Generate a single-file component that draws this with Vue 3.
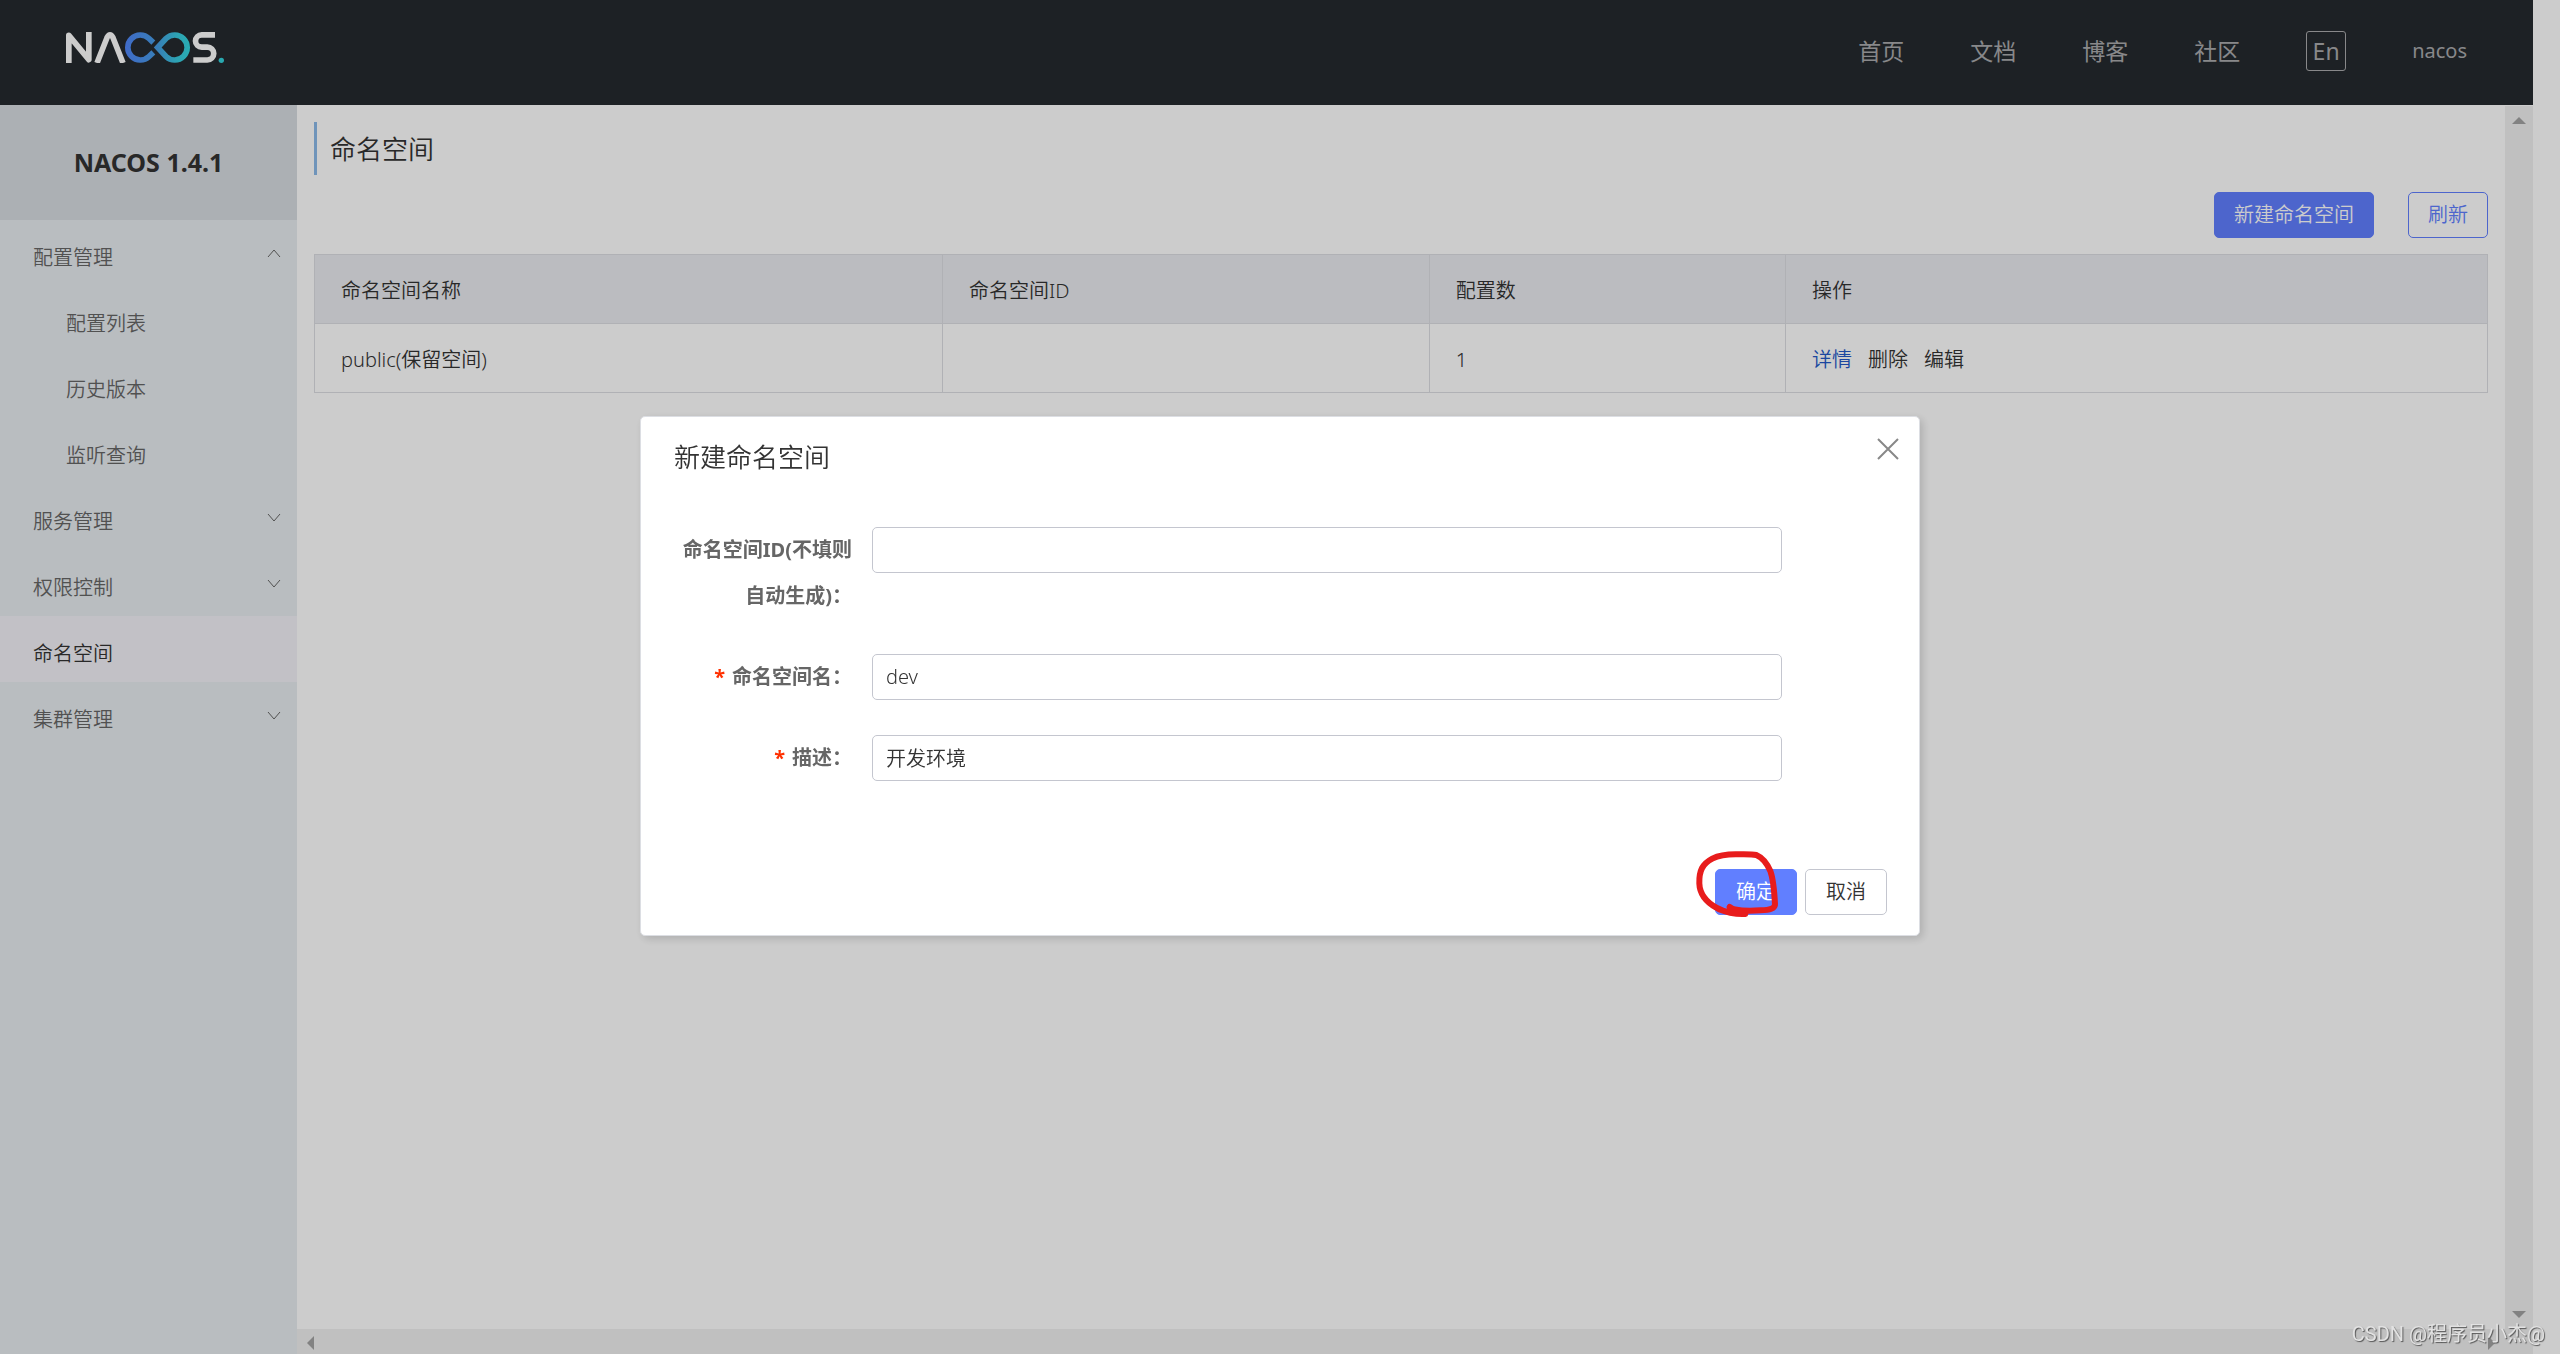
<script setup>
import { ref } from 'vue'

const navLinks = ['首页', '文档', '博客', '社区']

const menu = [
  { label: '配置管理', open: true, children: ['配置列表', '历史版本', '监听查询'] },
  { label: '服务管理', children: [] },
  { label: '权限控制', children: [] },
  { label: '命名空间', active: true },
  { label: '集群管理', children: [] },
]

const rows = [{ name: 'public(保留空间)', id: '', count: 1 }]

const namespaceId = ref('')
const namespaceName = ref('dev')
const description = ref('开发环境')
</script>

<template>
  <div class="page">
    <header class="topbar">
      <a class="logo" href="#" aria-label="Nacos">
        <svg viewBox="198 96 474 93" width="158" height="31" fill="none" stroke-width="17">
          <defs>
            <linearGradient id="loop" gradientUnits="userSpaceOnUse" x1="374" y1="0" x2="571" y2="0">
              <stop offset="0" stop-color="#5086fb" />
              <stop offset="0.5" stop-color="#469fe6" />
              <stop offset="0.8" stop-color="#38cce0" />
              <stop offset="1" stop-color="#34d8e0" />
            </linearGradient>
          </defs>
          <g stroke="#fff" stroke-linejoin="round">
            <path d="M206.500 189V106L266.500 179V96" />
            <path d="M291 189L321 113Q330 96 339 113L369 189" />
            <path d="M645 104.500H605A18.500 18.500 0 0 0 605 141.500H622A19 19 0 0 1 622 180H580" />
          </g>
          <g stroke="url(#loop)">
            <path d="M460 128L447 115.500A37.500 37.500 0 1 0 447 169.500L460 157" />
            <path d="M473 142.500L498 115.500A37.500 37.500 0 1 1 498 169.500Z" />
          </g>
          <circle cx="664" cy="181" r="8" fill="#34d2dc" />
        </svg>
      </a>
      <nav class="nav">
        <a v-for="link in navLinks" :key="link" href="#">{{ link }}</a>
        <button class="lang" type="button">En</button>
        <a class="user" href="#">nacos</a>
      </nav>
    </header>

    <div class="shell">
      <aside class="sidebar">
        <div class="version">NACOS 1.4.1</div>
        <ul class="menu">
          <template v-for="item in menu" :key="item.label">
            <li>
              <a class="item" :class="{ active: item.active }" href="#">
                <span>{{ item.label }}</span>
                <svg v-if="item.children" class="chevron" viewBox="0 0 14 9" width="14" height="9">
                  <path :d="item.open ? 'M1 8L7 1L13 8' : 'M1 1L7 8L13 1'" />
                </svg>
              </a>
            </li>
            <template v-if="item.open">
              <li v-for="child in item.children" :key="child">
                <a class="item child" href="#"><span>{{ child }}</span></a>
              </li>
            </template>
          </template>
        </ul>
      </aside>

      <div class="viewport">
        <main class="content">
          <h1 class="title">命名空间</h1>
          <div class="toolbar">
            <button class="btn primary" type="button">新建命名空间</button>
            <button class="btn outline" type="button">刷新</button>
          </div>
          <table class="grid">
            <colgroup>
              <col class="c-name" />
              <col class="c-id" />
              <col class="c-count" />
              <col />
            </colgroup>
            <thead>
              <tr>
                <th>命名空间名称</th>
                <th>命名空间ID</th>
                <th>配置数</th>
                <th>操作</th>
              </tr>
            </thead>
            <tbody>
              <tr v-for="row in rows" :key="row.name">
                <td>{{ row.name }}</td>
                <td>{{ row.id }}</td>
                <td>{{ row.count }}</td>
                <td>
                  <div class="actions">
                    <a class="detail" href="#">详情</a>
                    <a href="#">删除</a>
                    <a href="#">编辑</a>
                  </div>
                </td>
              </tr>
            </tbody>
          </table>
        </main>
        <div class="track vertical" aria-hidden="true">
          <svg viewBox="0 0 14 7" width="14" height="7"><path d="M0 7L7 0L14 7Z" /></svg>
          <svg viewBox="0 0 14 7" width="14" height="7"><path d="M0 0L7 7L14 0Z" /></svg>
        </div>
        <div class="track horizontal" aria-hidden="true">
          <svg viewBox="0 0 7 14" width="7" height="14"><path d="M7 0L0 7L7 14Z" /></svg>
          <svg viewBox="0 0 7 14" width="7" height="14"><path d="M0 0L7 7L0 14Z" /></svg>
        </div>
        <div class="track"></div>
      </div>
    </div>

    <div class="overlay">
      <form class="dialog" role="dialog" aria-labelledby="dialog-title" @submit.prevent>
        <div class="dialog-head">
          <h2 id="dialog-title">新建命名空间</h2>
          <button class="close" type="button" aria-label="关闭">
            <svg viewBox="0 0 22 22" width="22" height="22"><path d="M1 1L21 21M21 1L1 21" /></svg>
          </button>
        </div>
        <div class="fields">
          <div class="field">
            <label for="ns-id">命名空间ID(不填则自动生成)：</label>
            <input id="ns-id" v-model="namespaceId" type="text" />
          </div>
          <div class="field required">
            <label for="ns-name">命名空间名：</label>
            <input id="ns-name" v-model="namespaceName" type="text" />
          </div>
          <div class="field required">
            <label for="ns-desc">描述：</label>
            <input id="ns-desc" v-model="description" type="text" />
          </div>
        </div>
        <div class="dialog-foot">
          <div class="marked">
            <button class="btn primary" type="submit">确定</button>
            <svg class="scribble" viewBox="129 81 270 219" width="90" height="73" aria-hidden="true">
              <path
                d="M242 261C258 272 275 280 289 282C262 284 224 276 202 263C172 246 152 220 151 190C150 152 160 132 190 116C212 105 235 103 260 103C290 103 308 102 322 105C338 112 354 130 364 153C374 180 376 215 378 252C379 266 362 270 335 271C310 273 275 272 258 268"
              />
            </svg>
          </div>
          <button class="btn normal" type="button">取消</button>
        </div>
      </form>
    </div>

    <div class="watermark">CSDN @程序员小杰@</div>
  </div>
</template>

<style>
body {
  margin: 0;
  background: #fff;
}
</style>

<style scoped>
.page,
.page * {
  box-sizing: border-box;
}

.page {
  display: flex;
  flex-direction: column;
  min-height: 100vh;
  padding-right: 27px;
  font-family: "Noto Sans", "Noto Sans CJK SC", sans-serif;
  font-size: 20px;
  font-weight: 350;
  line-height: 28px;
  color: #333;
}

a {
  color: inherit;
  text-decoration: none;
}

button,
input {
  font: inherit;
  color: inherit;
}

.topbar {
  display: flex;
  align-items: center;
  justify-content: space-between;
  height: 105px;
  padding: 0 66px;
  background: #252a2f;
}

.logo {
  display: flex;
  padding-bottom: 10px;
}

.nav {
  display: flex;
  align-items: center;
  gap: 66px;
  padding-bottom: 4px;
  font-size: 23px;
  font-weight: 400;
  color: #aaabad;
}

.lang {
  width: 40px;
  height: 40px;
  padding: 0;
  border: 1px solid #aaabad;
  border-radius: 3px;
  background: none;
  line-height: 32px;
}

.user {
  font-size: 20px;
}

.shell {
  display: flex;
  flex: 1;
}

.sidebar {
  width: 297px;
  background: #e8edf1;
}

.version {
  height: 115px;
  background: #d7dce2;
  font-size: 25px;
  font-weight: 700;
  line-height: 115px;
  text-align: center;
}

.menu {
  margin: 0;
  padding: 0;
  list-style: none;
}

.item {
  display: flex;
  align-items: center;
  justify-content: space-between;
  height: 66px;
  padding: 0 16px 0 33px;
  color: #666;
}

.item span {
  padding-top: 10px;
}

.item.child {
  padding-left: 66px;
}

.item.active {
  background: #f3f2f8;
  color: #333;
}

.chevron {
  fill: none;
  stroke: #666;
  stroke-width: 1;
}

.viewport {
  display: grid;
  flex: 1;
  grid-template-columns: 1fr 28px;
  grid-template-rows: 1fr 25px;
}

.content {
  padding: 17px;
}

.title {
  height: 53px;
  margin: 0 0 17px;
  padding-left: 13px;
  border-left: 3px solid #8bb9e9;
  font-size: 26px;
  font-weight: inherit;
  line-height: 54px;
}

.toolbar {
  display: flex;
  justify-content: flex-end;
  gap: 34px;
  margin-bottom: 16px;
}

.btn {
  height: 46px;
  padding: 0 19px;
  border: 1px solid #617fff;
  border-radius: 5px;
  background: #fff;
  line-height: 44px;
  white-space: nowrap;
}

.btn.primary {
  background: #617fff;
  color: #fff;
}

.btn.outline {
  color: #617fff;
}

.btn.normal {
  border-color: #c4c6cf;
}

.grid {
  width: 100%;
  border-collapse: collapse;
  table-layout: fixed;
}

.c-name {
  width: 28.9%;
}

.c-id {
  width: 22.4%;
}

.c-count {
  width: 16.4%;
}

.grid th,
.grid td {
  height: 69px;
  padding: 4px 26px 0;
  border: 1px solid #dcdee3;
  font-weight: inherit;
  text-align: left;
}

.grid th {
  background: #eaecf0;
}

.actions {
  display: flex;
  gap: 16px;
}

.detail {
  color: #2458c8;
}

.track {
  display: flex;
  align-items: center;
  justify-content: space-between;
  background: #f1f1f1;
  fill: #a3a3a3;
}

.track.vertical {
  flex-direction: column;
  margin-top: 1px;
  padding: 11px 0;
}

.track.horizontal {
  padding: 2px 10px 0;
}

.overlay {
  position: fixed;
  inset: 0;
  display: flex;
  align-items: center;
  justify-content: center;
  padding-bottom: 3px;
  background: rgba(0, 0, 0, 0.2);
}

.dialog {
  width: 50%;
  padding: 20px 32px 20px 33px;
  border: 1px solid #dcdee3;
  border-radius: 5px;
  background: #fff;
  box-shadow: 3px 3px 8px rgba(0, 0, 0, 0.15);
}

.dialog-head {
  position: relative;
}

.dialog-head h2 {
  margin: 0 0 50px;
  font-size: 26px;
  font-weight: inherit;
  line-height: 40px;
}

.close {
  position: absolute;
  top: 1px;
  right: -12px;
  display: flex;
  padding: 0;
  border: 0;
  background: none;
}

.close path {
  stroke: #888;
  stroke-width: 2;
}

.fields {
  display: flex;
  flex-direction: column;
  gap: 35px;
}

.field {
  display: grid;
  grid-template-columns: 178px 75%;
  column-gap: 20px;
  align-items: start;
}

.field label {
  color: #666;
  font-weight: 700;
  line-height: 46px;
  text-align: right;
}

.required label::before {
  content: "*";
  margin-right: 7px;
  color: #ff3000;
}

.field input {
  width: 100%;
  height: 46px;
  padding: 0 13px;
  border: 1px solid #c4c6cf;
  border-radius: 5px;
  background: #fff;
  outline: none;
}

.dialog-foot {
  display: flex;
  justify-content: flex-end;
  gap: 8px;
  margin-top: 88px;
}

.dialog-foot .btn {
  padding: 0 20px;
}

.marked {
  position: relative;
}

.scribble {
  position: absolute;
  top: -22px;
  left: -23px;
  pointer-events: none;
}

.scribble path {
  fill: none;
  stroke: #e81c1c;
  stroke-width: 18;
  stroke-linecap: round;
  stroke-linejoin: round;
}

.watermark {
  position: fixed;
  right: 15px;
  bottom: 6px;
  color: #e2e2e2;
  font-family: Roboto, "Noto Sans CJK SC", sans-serif;
  font-size: 20px;
  font-weight: 400;
  text-shadow: 1px 1px 1px #555;
}
</style>
